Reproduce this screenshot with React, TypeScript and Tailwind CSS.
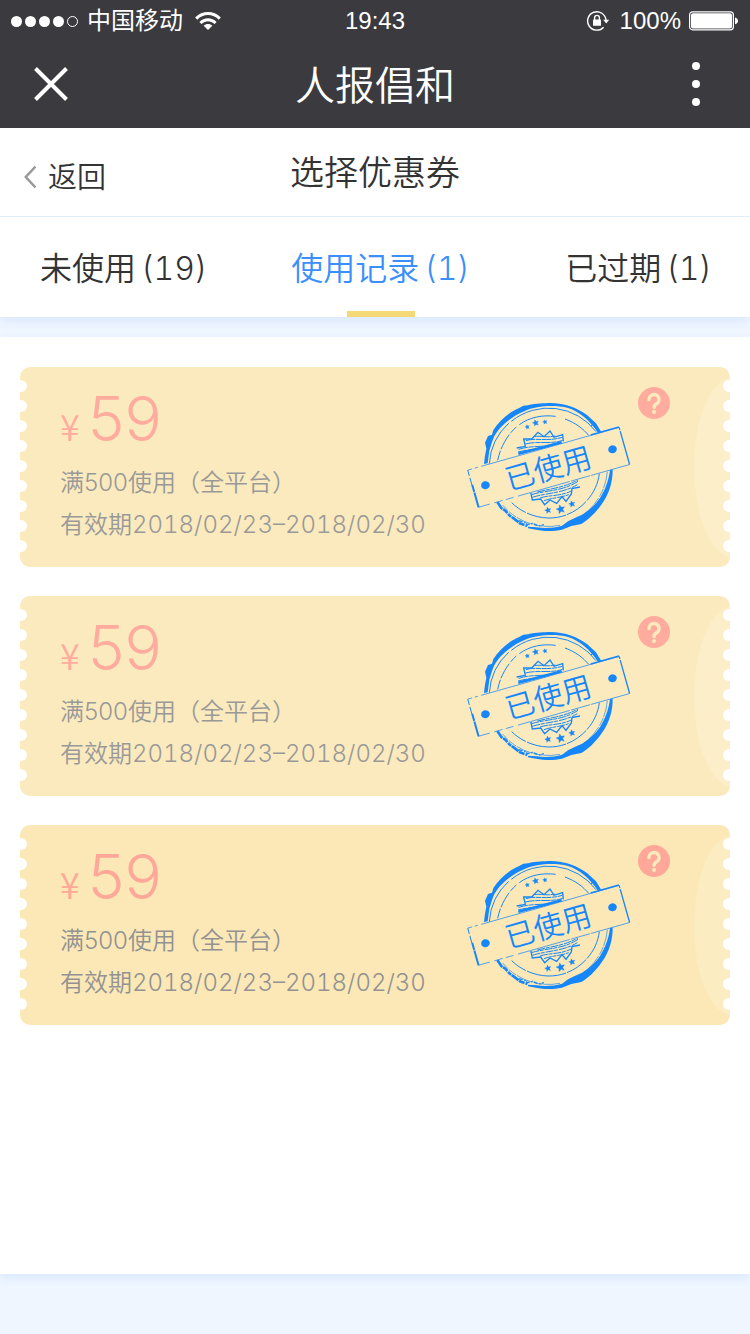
const NOTCHES = [0, 1, 2, 3, 4, 5, 6, 7, 8];

type Coupon = { id: number; amount: number; threshold: number; scope: string; period: string; strong: boolean };

const coupons: Coupon[] = [
  { id: 1, amount: 59, threshold: 500, scope: "（全平台）", period: "有效期2018/02/23–2018/02/30", strong: false },
  { id: 2, amount: 59, threshold: 500, scope: "（全平台）", period: "有效期2018/02/23–2018/02/30", strong: false },
  { id: 3, amount: 59, threshold: 500, scope: "（全平台）", period: "有效期2018/02/23–2018/02/30", strong: true },
];

const tabs = [
  { label: "未使用", count: 19, active: false, align: "justify-start pl-10" },
  { label: "使用记录", count: 1, active: true, align: "justify-center" },
  { label: "已过期", count: 1, active: false, align: "justify-end pr-[38px]" },
];

function WifiIcon() {
  return (
    <svg className="h-5 w-[26px]" viewBox="0 0 26 20" fill="none" stroke="#fff" strokeWidth="3" aria-hidden="true">
      <path d="M1.2 7.6C8 .9 18 .9 24.8 7.6" />
      <path d="M5.4 12C9.8 7.8 16.2 7.8 20.6 12" />
      <path d="M13 19 8.7 14.7C11 12.5 15 12.5 17.3 14.7Z" fill="#fff" stroke="none" />
    </svg>
  );
}

function RotationLockIcon() {
  return (
    <svg className="h-[22px] w-6" viewBox="0 0 24 22" fill="none" aria-hidden="true">
      <path d="M20 10.2A9.2 9.2 0 1 0 17.6 17.2" stroke="#fff" strokeWidth="1.4" />
      <path d="M17.2 9.8h6l-3 3.8z" fill="#fff" />
      <rect x="7" y="9.6" width="8" height="6.2" rx=".6" fill="#fff" />
      <path d="M8.6 10V7.8a2.4 2.4 0 0 1 4.8 0V10" stroke="#fff" strokeWidth="1.4" />
    </svg>
  );
}

function BatteryIcon() {
  return (
    <svg className="h-5 w-[50px]" viewBox="0 0 50 20" aria-hidden="true">
      <rect x=".6" y=".8" width="43.8" height="18" rx="3" fill="none" stroke="#fff" strokeWidth="1.2" />
      <rect x="2" y="2.2" width="41" height="15.2" rx="2" fill="#fff" />
      <path d="M46 6.4c4 1 4 5.8 0 6.8z" fill="#fff" />
    </svg>
  );
}

function StatusBar() {
  return (
    <div className="grid h-10 grid-cols-[1fr_auto_1fr] items-center px-[11px] pt-[2px] text-2xl leading-none text-white">
      <div className="flex items-center">
        <span className="flex gap-[3px]">
          {[0, 1, 2, 3].map((n) => (
            <i key={n} className="size-[11px] rounded-full bg-white" />
          ))}
          <i className="size-[11px] rounded-full border border-white" />
        </span>
        <span className="mr-3 ml-[9px]">中国移动</span>
        <WifiIcon />
      </div>
      <time className="font-['Liberation_Sans',sans-serif]">19:43</time>
      <div className="flex items-center justify-end">
        <RotationLockIcon />
        <span className="mr-2 ml-[10px] font-['Liberation_Sans',sans-serif]">100%</span>
        <BatteryIcon />
      </div>
    </div>
  );
}

function StarShape({ x, y, r }: { x: number; y: number; r: number }) {
  const points = NOTCHES.concat(9)
    .map((n) => {
      const radius = n % 2 === 0 ? r : r * 0.45;
      const angle = (-105 + n * 36) * (Math.PI / 180);
      return `${(x + radius * Math.cos(angle)).toFixed(1)},${(y + radius * Math.sin(angle)).toFixed(1)}`;
    })
    .join(" ");
  return <polygon points={points} fill="#1687fb" />;
}

function UsedStamp({ bannerClass }: { bannerClass: string }) {
  return (
    <svg
      className="h-[130px] w-[166px] shrink-0"
      viewBox="78 66 498 390"
      fill="none"
      stroke="#1687fb"
      role="img"
      aria-label="已使用"
    >
      {/* outer worn ring */}
      <path
        d="M132 252C134 232 136 220 139 206L135 188L144 168L156 164L160 150C180 121 207 97 236 85L250 77L264 76C288 69 314 70 330 69C376 69 414 85 442 106L468 130L484 156L472 156C452 124 418 94 384 84C344 74 290 77 254 93C214 109 178 140 162 170L156 186L148 212L143 250Z"
        fill="#1687fb"
        stroke="none"
      />
      <path
        d="M518 266C519 304 508 342 484 374C466 400 444 420 424 432L394 438L366 449C340 455 312 454 288 449L264 445L264 440L290 442C318 446 344 443 366 437L384 424L404 414L426 404C452 388 466 374 480 354C496 328 506 302 510 270Z"
        fill="#1687fb"
        stroke="none"
      />
      <path d="M172 366L184 384L196 392L208 406L222 416L240 430L262 438" strokeWidth="8" strokeDasharray="26 2 18 3 12 2" />
      <path d="M236 422L258 428L262 434L278 430L296 438L312 434" strokeWidth="4" strokeDasharray="12 5 5 3" />
      <path d="M148 251A178 178 0 0 1 206 130M214 124A178 178 0 0 1 468 155" strokeWidth="3" />
      <path d="M502 275A178 178 0 0 1 430 404M360 436A178 178 0 0 1 188 375" strokeWidth="2" strokeDasharray="50 3 26 5" />
      <path d="M448 122L458 132L454 138M462 128L468 142" strokeWidth="4" />
      {/* inner ring */}
      <path d="M173 241C180 206 200 166 229 141" strokeWidth="3" strokeDasharray="30 5 50 7" />
      <path d="M238 134C269 111 308 104 347 109M375 117C408 129 430 147 446 166" strokeWidth="3" />
      <path d="M478 281C470 350 406 416 324 414C282 413 241 394 215 368" strokeWidth="3" strokeDasharray="90 4 70 3 120 4" />
      {/* upper badge half */}
      <path d="M230 204L256 199L251 177L275 177L294 157L312 170L330 153L342 172L368 164L370 184" strokeWidth="4" />
      <g strokeWidth="3" strokeDasharray="28 2 16 2">
        <path d="M284 170C300 166 318 174 346 168M258 182C290 172 320 186 367 172M256 192C296 182 330 194 368 181M236 208C280 194 320 204 369 190M234 216C280 204 320 208 366 196" />
      </g>
      <path d="M235 221L365 187" strokeWidth="8" />
      {/* lower badge half */}
      <path d="M272 336L277 360L302 357L314 374L330 360L350 370L366 350L378 364L394 342L396 326L420 321" strokeWidth="4" />
      <g strokeWidth="3" strokeDasharray="24 2 12 3">
        <path d="M274 344C320 330 370 334 414 304M277 352C320 338 370 340 412 314M300 354C330 344 360 350 396 332M312 362C340 352 360 354 386 344M292 336C330 326 370 324 414 300" />
      </g>
      <StarShape x={262} y={141} r={7} />
      <StarShape x={287} y={129} r={10} />
      <StarShape x={315} y={126} r={7} />
      <StarShape x={324} y={391} r={10} />
      <StarShape x={362} y={388} r={14} />
      <StarShape x={396} y={372} r={10} />
      {/* banner */}
      <g transform="rotate(-15.8 326 262)">
        <rect x="90" y="204" width="472" height="116" stroke="none" className={bannerClass} />
        <path d="M90 204H104M112 204H122M132 204H560" strokeWidth="2" />
        <path d="M474 203H562" strokeWidth="5" />
        <path d="M562 204V320" strokeWidth="4" strokeDasharray="8 4 110" />
        <path d="M562 320H214M200 320H176M166 320H140M126 320H90" strokeWidth="2" strokeDasharray="120 3 60 4" />
        <path d="M90 204V222M90 228V250" strokeWidth="3" />
        <path d="M91 250V320" strokeWidth="6" strokeDasharray="22 2 46" />
        <ellipse cx="129" cy="262" rx="13" ry="12" fill="#1687fb" stroke="none" />
        <ellipse cx="525" cy="262" rx="13" ry="12" fill="#1687fb" stroke="none" />
        <text
          x="324"
          y="296"
          textAnchor="middle"
          fill="#1687fb"
          stroke="none"
          className="font-['Noto_Sans_CJK_SC',sans-serif] text-[88px] font-[350]"
        >
          已使用
        </text>
      </g>
    </svg>
  );
}

function NotchColumn({ side }: { side: "left" | "right" }) {
  return (
    <div className="relative flex w-[7px] shrink-0 flex-col gap-2 pt-[13px]" aria-hidden="true">
      {NOTCHES.map((n) => (
        <span
          key={n}
          className={side === "left" ? "h-3 rounded-r-[6px] bg-white" : "h-3 rounded-l-[6px] bg-white"}
        />
      ))}
    </div>
  );
}

function CouponCard({ coupon }: { coupon: Coupon }) {
  const { strong } = coupon;
  return (
    <li className={`relative flex overflow-hidden rounded-[10px] ${strong ? "bg-[#fbe8b6]" : "bg-[#fbeabd]"}`}>
      <span
        className={`absolute top-[10px] -right-[43px] h-[181px] w-[79px] rounded-[50%] ${strong ? "bg-[#fbecc2]" : "bg-[#fbeec8]"}`}
      />
      <NotchColumn side="left" />
      <div
        className={`min-w-0 flex-1 pt-4 pb-5 pl-[33px] text-2xl leading-[44px] font-[350] whitespace-nowrap ${strong ? "text-[#929292]" : "text-[#999]"}`}
      >
        <p className={`mb-1 flex items-baseline ${strong ? "text-[#ffa798]" : "text-[#ffac9f]"}`}>
          <span className="mr-2 font-['Noto_Sans_CJK_SC',sans-serif] text-4xl leading-none">¥</span>
          <span className="text-[62px] leading-[72px]">{coupon.amount}</span>
        </p>
        <p className="h-11 font-['Noto_Sans_CJK_SC',sans-serif]">
          满<span className="font-['Inter',sans-serif] leading-none">{coupon.threshold}</span>使用{coupon.scope}
        </p>
        <p className="h-11 tabular-nums">{coupon.period}</p>
      </div>
      <div className="mr-[53px] flex gap-[6px]">
        <div className="pt-[35px]">
          <UsedStamp bannerClass={strong ? "fill-[#fbe8b6]" : "fill-[#fbeabd]"} />
        </div>
        <button
          type="button"
          aria-label="使用说明"
          className={`mt-5 size-8 rounded-full ${strong ? "bg-[#ffa798]" : "bg-[#ffac9f]"}`}
        >
          <svg viewBox="0 0 32 32" fill="none" aria-hidden="true">
            <path
              d="M11 12.6A5 5 0 1 1 18.2 17C16.6 17.9 16 18.8 16 20.6"
              stroke="#fbeabd"
              strokeWidth="3.4"
              strokeLinecap="round"
            />
            <circle cx="16" cy="25" r="2" fill="#fbeabd" />
          </svg>
        </button>
      </div>
      <NotchColumn side="right" />
    </li>
  );
}

export default function App() {
  return (
    <div className="flex min-h-screen flex-col bg-[#eff6ff] font-['Inter','Noto_Sans_CJK_SC',sans-serif] text-[#333]">
      <header className="relative z-20 bg-[#3a3a3f] text-white">
        <StatusBar />
        <div className="grid h-[88px] grid-cols-[1fr_auto_1fr] items-center px-[33px]">
          <button type="button" aria-label="关闭" className="size-9">
            <svg viewBox="0 0 36 36" stroke="#fff" strokeWidth="4" aria-hidden="true">
              <path d="M2.5 2.5 33.5 33.5M33.5 2.5 2.5 33.5" />
            </svg>
          </button>
          <h1 className="pt-1 text-[40px] leading-none font-[350]">人报倡和</h1>
          <button type="button" aria-label="更多" className="flex flex-col gap-[10px] justify-self-end pr-[17px]">
            <i className="size-2 rounded-full bg-white" />
            <i className="size-2 rounded-full bg-white" />
            <i className="size-2 rounded-full bg-white" />
          </button>
        </div>
      </header>

      <div className="z-10 bg-white font-[350] shadow-[0_4px_10px_#d8e8fc]">
        <div className="grid h-[89px] grid-cols-[1fr_auto_1fr] items-center border-b border-[#e0eefd] px-6 pt-[2px]">
          <a href="#back" className="flex items-center gap-3 pt-2 text-[29px] leading-none">
            <svg className="h-6 w-3" viewBox="0 0 12 24" fill="none" stroke="#999" strokeWidth="2.5" aria-hidden="true">
              <path d="M11.5 1.5 1.8 12l9.7 10.5" />
            </svg>
            返回
          </a>
          <h2 className="text-[34px] leading-none">选择优惠券</h2>
        </div>
        <nav className="grid h-[100px] grid-cols-[64fr_72fr_61fr]">
          {tabs.map((tab) => (
            <a
              key={tab.label}
              href="#tab"
              aria-current={tab.active ? "page" : undefined}
              className={`relative flex items-center gap-[5px] pt-1 text-[32px] whitespace-nowrap tabular-nums ${tab.align} ${tab.active ? "text-[#3b8ffb]" : ""}`}
            >
              <span>{tab.label}</span>
              <span>({tab.count})</span>
              {tab.active && (
                <span className="absolute bottom-0 left-1/2 h-[6px] w-[68px] -translate-x-1/2 bg-[#f6d977]" />
              )}
            </a>
          ))}
        </nav>
      </div>

      <main className="mt-5 mb-[60px] flex-1 bg-white px-5 py-[30px] shadow-[0_4px_10px_#d8e8fc]">
        <ul className="flex flex-col gap-[29px]">
          {coupons.map((coupon) => (
            <CouponCard key={coupon.id} coupon={coupon} />
          ))}
        </ul>
      </main>
    </div>
  );
}
